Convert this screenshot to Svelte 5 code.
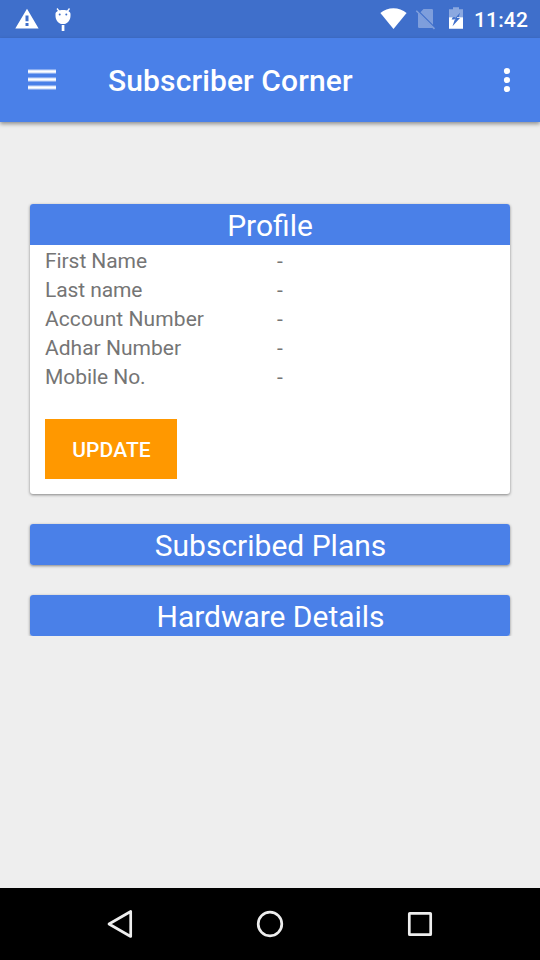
<script>
  const fields = [
    { label: 'First Name', value: '-', spacing: -0.07 },
    { label: 'Last name', value: '-', spacing: -0.1 },
    { label: 'Account Number', value: '-', spacing: 0.08 },
    { label: 'Adhar Number', value: '-', spacing: 0.02 },
    { label: 'Mobile No.', value: '-', spacing: -0.06 }
  ];
</script>

<div class="screen">
  <div class="status">
    <svg class="notices" width="80" height="38" viewBox="0 0 80 38">
      <path fill="#fff" fill-rule="evenodd" d="M27 8.700 38.600 28.600H15.300zM25.500 15.500v5.700h3v-5.700zM25.500 23v3h3v-3z" />
      <path d="M57 8.500l3 4M69.500 8.500l-3 4" stroke="#fff" stroke-width="1.300" />
      <path fill="#fff" d="M55.500 14c0-2.500 3.400-4 7.500-4s7.500 1.500 7.500 4v1.700c0 4-2.700 7.600-6.100 8.300h-2.800c-3.400-.7-6.100-4.300-6.100-8.300z" />
      <path fill="#fff" d="M61.700 25h2.700v6h-2.700z" />
      <circle cx="59.700" cy="14.500" r="1" fill="#3f6fcb" />
      <circle cx="66.300" cy="14.500" r="1" fill="#3f6fcb" />
    </svg>
    <div class="system">
      <svg width="95" height="38" viewBox="375 0 95 38">
        <path fill="#fff" d="M380.400 13.100C387.500 6.600 399.300 6.600 406.600 13.100L393.500 29z" />
        <g opacity=".33">
          <path fill="#fff" d="M423.500 9h8.300q1.200 0 1.200 1.200v14.600L420.500 12.200zM418 13 433 28H419.200q-1.200 0-1.200-1.200z" />
          <path d="M416.300 10.700 434.500 28.900" stroke="#fff" stroke-width="1.600" />
        </g>
        <path fill="#fff" fill-opacity=".4" d="M449 9.300h4V7.300h6v2h4V17.300h-4.300l1.300-4.500-6.500 7.200h2l-.4-2.700H449z" />
        <path fill="#fff" fill-rule="evenodd" d="M449 17.200h3.800l-1.200 2.300h3.200l-2.300 6.700 7.500-8.200h-3.200l.3-.8H463V28.800h-14z" />
      </svg>
      <span class="time">11:42</span>
    </div>
  </div>

  <header class="toolbar">
    <svg width="28" height="22" viewBox="0 0 28 22">
      <g fill="#fff">
        <path fill-opacity=".35" d="M0 0h28v5H0zM0 8h28v5H0zM0 16h28v5H0z" />
        <path fill-opacity=".45" d="M0 1h28v3H0zM0 9h28v3H0zM0 17h28v3H0z" />
        <path d="M0 1.500h28v2H0zM0 9.500h28v2H0zM0 17.500h28v2H0z" />
      </g>
    </svg>
    <h1>Subscriber Corner</h1>
    <svg class="more" width="8" height="26" viewBox="0 0 8 26">
      <g fill="#fff"><circle cx="4" cy="4" r="3.100" /><circle cx="4" cy="13" r="3.100" /><circle cx="4" cy="22" r="3.100" /></g>
    </svg>
  </header>

  <main>
    <section class="card">
      <h2>Profile</h2>
      <dl>
        {#each fields as field}
          <div class="row">
            <dt style:letter-spacing="{field.spacing}px">{field.label}</dt>
            <dd>{field.value}</dd>
          </div>
        {/each}
      </dl>
      <button>UPDATE</button>
    </section>
    <section class="card"><h2 class="plans">Subscribed Plans</h2></section>
    <section class="card"><h2 class="hardware">Hardware Details</h2></section>
  </main>

  <nav>
    <svg width="360" height="72" viewBox="90 888 360 72" fill="none" stroke="#eee" stroke-width="2.700" stroke-linejoin="round">
      <path d="M130.700 911.500V936.500L109 924z" />
      <circle cx="270" cy="924" r="11.800" />
      <rect x="409.300" y="913.300" width="21.400" height="21.400" rx=".5" />
    </svg>
  </nav>
</div>

<style>
  .screen {
    width: 540px;
    height: 960px;
    display: flex;
    flex-direction: column;
    background: #eee;
    font-family: Roboto, sans-serif;
    overflow: hidden;
  }
  .status {
    height: 38px;
    flex: none;
    display: flex;
    justify-content: space-between;
    background: #3f6fcb;
    color: #fff;
  }
  .system {
    width: 165px;
    display: flex;
  }
  .system svg {
    flex: none;
  }
  .time {
    margin-left: 4px;
    font-size: 21px;
    font-weight: 500;
    letter-spacing: .15px;
    line-height: 40px;
    white-space: nowrap;
  }
  .toolbar {
    position: relative;
    z-index: 1;
    height: 84px;
    flex: none;
    box-sizing: border-box;
    display: flex;
    align-items: center;
    padding: 0 29px 0 28px;
    background: #4a80e8;
    box-shadow: 0 2px 4px rgba(0, 0, 0, .4);
    color: #fff;
  }
  h1 {
    flex: 1;
    margin: 0 0 0 52px;
    font-size: 30px;
    font-weight: 500;
    letter-spacing: .12px;
    line-height: 84px;
    padding-top: 2px;
    white-space: nowrap;
  }
  .more {
    flex: none;
  }
  main {
    flex: none;
    height: 514px;
    box-sizing: border-box;
    padding: 82px 30px 0;
    display: flex;
    flex-direction: column;
    gap: 30px;
    overflow: hidden;
  }
  .card {
    flex: none;
    border-radius: 3px;
    background: #fff;
    box-shadow: 0 1px 3px rgba(0, 0, 0, .45);
  }
  .card:first-child {
    height: 290px;
  }
  h2 {
    height: 41px;
    margin: 0;
    border-radius: 3px 3px 0 0;
    background: #4a80e8;
    color: #fff;
    font-size: 30px;
    font-weight: 400;
    line-height: 43px;
    text-align: center;
  }
  .plans, .hardware {
    border-radius: 3px;
    padding-left: 1px;
  }
  .hardware {
    letter-spacing: -.04px;
  }
  dl {
    margin: 0;
    padding: 1px 15px 0;
  }
  .row {
    display: flex;
    height: 29px;
    line-height: 30px;
    font-size: 21px;
    color: #757575;
  }
  dt {
    width: 232px;
  }
  dd {
    margin: 0;
  }
  button {
    display: block;
    width: 132px;
    height: 60px;
    margin: 28px 15px 15px;
    padding: 2px 0 0 1px;
    border: 0;
    background: #ff9800;
    color: #fff;
    font: 500 21px Roboto, sans-serif;
    letter-spacing: .12px;
  }
  nav {
    height: 72px;
    flex: none;
    margin-top: auto;
    display: flex;
    justify-content: center;
    background: #000;
  }
</style>
